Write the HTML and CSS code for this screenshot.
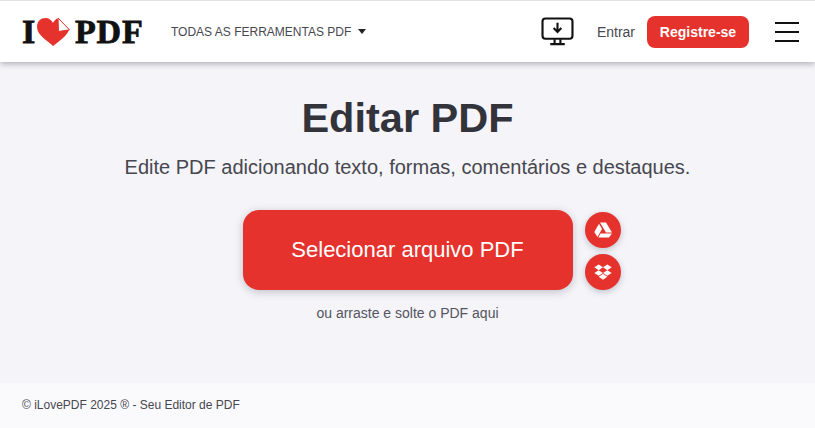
FILE: index.html
```html
<!DOCTYPE html>
<html lang="pt">
<head>
    <meta charset="UTF-8">
    <meta name="viewport" content="width=device-width, initial-scale=1.0">
    <title>Editar PDF</title>
    <link rel="stylesheet" href="styles.css">
</head>
<body>
    <header class="header">
        <a class="logo" href="#">
            <span>I</span>
            <svg class="logo-heart" width="34" height="30" viewBox="0 0 34 30">
                <path d="M17 29 C12 24 1 18 1 10 C1 4 5 1 9.500 1 C13 1 15.500 3 17 6 C18 4 19.500 2.500 21 1.500 L33 13 C31 19 22 25 17 29 Z" fill="#e5322d"/>
                <path d="M22 1 L33.500 12.800 L22.500 14.500 Z" fill="#fff" stroke="#e5322d" stroke-width="1"/>
            </svg>
            <span>PDF</span>
        </a>
        <a class="tools-link" href="#">TODAS AS FERRAMENTAS PDF <i class="caret"></i></a>
        <div class="header-right">
            <svg class="desktop-icon" width="33" height="29" viewBox="0 0 34 30" fill="none" stroke="#111" stroke-width="2.200">
                <rect x="1.500" y="1.500" width="31" height="21" rx="3"/>
                <path d="M17 6 V15 M13 11.500 L17 15.500 L21 11.500"/>
                <path d="M14 23 V27 M20 23 V27 M9.500 28 H24.500"/>
            </svg>
            <a class="login" href="#">Entrar</a>
            <a class="register" href="#">Registre-se</a>
            <div class="burger"><span></span><span></span><span></span></div>
        </div>
    </header>

    <main class="main">
        <h1>Editar PDF</h1>
        <p class="subtitle">Edite PDF adicionando texto, formas, comentários e destaques.</p>
        <div class="upload">
            <a class="upload-btn" href="#">Selecionar arquivo PDF</a>
            <div class="cloud">
                <a class="cloud-btn" href="#">
                    <svg width="18" height="16" viewBox="0 0 18 16" fill="#fff">
                        <path d="M6 0.500 H12 L18 10.500 H12 Z"/>
                        <path d="M5 1.800 L8 7 L3.500 15 L0.300 10 Z"/>
                        <path d="M6.500 11.500 H18 L15 15.500 H4.300 Z"/>
                    </svg>
                </a>
                <a class="cloud-btn" href="#">
                    <svg width="18" height="17" viewBox="0 0 18 17" fill="#fff">
                        <path d="M4.700 0.500 L9 3.300 L4.700 6.200 L0.300 3.300 Z"/>
                        <path d="M13.300 0.500 L17.700 3.300 L13.300 6.200 L9 3.300 Z"/>
                        <path d="M4.700 6.200 L9 9 L4.700 11.800 L0.300 9 Z"/>
                        <path d="M13.300 6.200 L17.700 9 L13.300 11.800 L9 9 Z"/>
                        <path d="M4.700 12.800 L9 10 L13.300 12.800 L9 15.800 Z"/>
                    </svg>
                </a>
            </div>
        </div>
        <p class="drop-hint">ou arraste e solte o PDF aqui</p>
    </main>

    <footer class="footer">© iLovePDF 2025 ® - Seu Editor de PDF</footer>
</body>
</html>
```

FILE: styles.css
```css
body {
    margin: 0;
    height: 428px;
    overflow: hidden;
    display: flex;
    flex-direction: column;
    background: #f4f4f9;
    font-family: 'Liberation Sans', Arial, sans-serif;
    color: #47474f;
}

a {
    text-decoration: none;
    color: inherit;
}

.header {
    height: 61px;
    flex-shrink: 0;
    display: flex;
    align-items: center;
    padding: 0 16px 0 22px;
    background: #fff;
    border-top: 1px solid #e2e2e2;
    box-shadow: 0 2px 6px rgba(72, 72, 90, 0.4);
}

.logo {
    display: flex;
    align-items: center;
    font-family: 'Liberation Serif', serif;
    font-weight: bold;
    font-size: 34px;
    letter-spacing: 0.8px;
    color: #111;
    width: 149px;
    -webkit-text-stroke: 0.8px #111;
}

.logo-heart {
    margin: 0 5px 0 0;
}

.tools-link {
    font-size: 12px;
    color: #47474f;
    display: flex;
    align-items: center;
}

.caret {
    width: 0;
    height: 0;
    margin-left: 7px;
    border-left: 4.500px solid transparent;
    border-right: 4.500px solid transparent;
    border-top: 5px solid #222;
}

.header-right {
    margin-left: auto;
    display: flex;
    align-items: center;
}

.desktop-icon {
    margin-right: 23px;
}

.login {
    font-size: 14px;
    color: #47474f;
    margin-right: 12px;
}

.register {
    width: 102px;
    height: 32px;
    line-height: 32px;
    text-align: center;
    background: #e5322d;
    color: #fff;
    font-size: 14px;
    font-weight: bold;
    border-radius: 8px;
    margin-right: 26px;
}

.burger {
    width: 24px;
    display: flex;
    flex-direction: column;
    gap: 7px;
}

.burger span {
    height: 2px;
    background: #111;
}

.main {
    flex: 1;
    display: flex;
    flex-direction: column;
    align-items: center;
}

h1 {
    margin: 30px 0 0;
    font-size: 41.500px;
    line-height: 52px;
    font-weight: bold;
    color: #33333b;
}

.subtitle {
    margin: 11px 0 0;
    font-size: 20px;
    line-height: 24px;
}

.upload {
    margin-top: 31px;
    display: flex;
    align-items: flex-end;
    gap: 12px;
    margin-left: 48px;
}

.upload-btn {
    width: 330px;
    height: 80px;
    line-height: 80px;
    text-align: center;
    background: #e5322d;
    color: #fff;
    font-size: 22px;
    border-radius: 16px;
    box-shadow: 0 2px 8px rgba(72, 72, 90, 0.3);
}

.cloud {
    display: flex;
    flex-direction: column;
    gap: 6px;
}

.cloud-btn {
    width: 36px;
    height: 36px;
    border-radius: 50%;
    background: #e5322d;
    display: flex;
    align-items: center;
    justify-content: center;
    box-shadow: 0 2px 6px rgba(72, 72, 90, 0.3);
}

.drop-hint {
    margin: 14px 0 0;
    font-size: 14px;
    line-height: 18px;
    color: #55555f;
}

.footer {
    height: 45px;
    flex-shrink: 0;
    line-height: 45px;
    padding-left: 22px;
    background: #fafafd;
    font-size: 12px;
    color: #47474f;
}
```
